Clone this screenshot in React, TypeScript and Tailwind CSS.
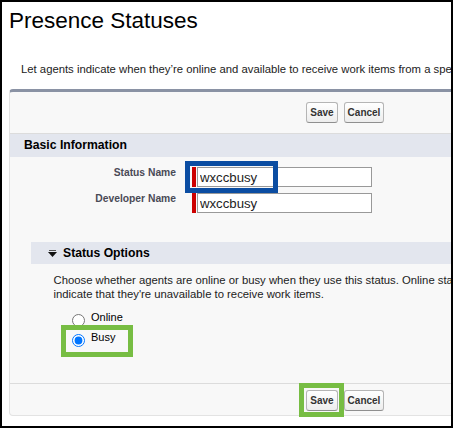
const Btn = ({ label, w }: { label: string; w: string }) => (
  <button
    className={`${w} h-[21px] rounded-[3px] border border-[#b5b5b5] border-b-[#8f8f8f] bg-gradient-to-b from-white to-[#ededed] text-[10px] font-bold text-[#333]`}
  >
    {label}
  </button>
);

const ButtonBar = () => (
  <div className="flex gap-[6px] pl-[296px]">
    <Btn label="Save" w="w-[32px]" />
    <Btn label="Cancel" w="w-[40px]" />
  </div>
);

const fields = [
  { label: "Status Name", value: "wxccbusy" },
  { label: "Developer Name", value: "wxccbusy" },
];

const radios = [
  { label: "Online", checked: false },
  { label: "Busy", checked: true },
];

export default function App() {
  return (
    <div className="relative h-[428px] w-[453px] overflow-hidden border-2 border-black bg-white font-['Liberation_Sans',Arial,sans-serif]">
      <h1 className="mt-[5px] pl-[7px] text-[22.5px] leading-[28px] text-black">Presence Statuses</h1>
      <p className="mt-[26px] whitespace-nowrap pl-[19px] text-[11.3px] leading-[16px] text-[#222]">
        Let agents indicate when they’re online and available to receive work items from a specific service channel.
      </p>

      <div className="ml-[7px] mt-[12px] w-[620px] rounded-[4px] border border-[#e3e3e3] border-t-[3px] border-t-[#8a92a4] bg-[#f8f8f8]">
        <div className="border-b border-[#dcdcdc] py-[10px]">
          <ButtonBar />
        </div>

        <div className="flex h-[23px] items-center bg-[#e3e6ee] pl-[14px] text-[12.2px] font-bold text-black">
          Basic Information
        </div>

        <div className="flex flex-col gap-[6px] pt-[10px]">
          {fields.map((f) => (
            <div key={f.label} className="flex items-start">
              <span className="w-[166px] pt-[1px] text-right text-[10.3px] font-bold leading-[10px] text-[#4a4a56]">
                {f.label}
              </span>
              <span className="ml-[16px] h-[20px] w-[4px] bg-[#c00]" />
              <input
                readOnly
                defaultValue={f.value}
                className="ml-[1px] h-[20px] w-[175px] border border-[#999] bg-white px-[2px] text-[13.2px] text-[#222] outline-none"
              />
            </div>
          ))}
        </div>

        <div className="ml-[21px] mt-[29px]">
          <div className="flex h-[22px] items-center bg-[#e3e6ee] pl-[17px]">
            <svg width="9" height="7" viewBox="0 0 9 7">
              <rect x="1" y="0" width="7" height="1" fill="#555" />
              <polygon points="0,2 9,2 4.5,7" fill="#111" />
            </svg>
            <span className="ml-[6px] text-[12.2px] font-bold text-black">Status Options</span>
          </div>

          <p className="whitespace-nowrap pl-[22.5px] pt-[9px] text-[11.3px] leading-[14px] text-[#222]">
            Choose whether agents are online or busy when they use this status. Online statuses let agents receive work items.
            <br />
            indicate that they're unavailable to receive work items.
          </p>

          <div className="mt-[10px] flex flex-col gap-[4px] pl-[41px]">
            {radios.map((r) => (
              <label key={r.label} className="flex h-[16px] items-start gap-[6px]">
                <input type="radio" name="kind" defaultChecked={r.checked} className="m-0 mt-[3px] h-[13px] w-[13px]" />
                <span className="text-[11px] leading-[12px] text-black">{r.label}</span>
              </label>
            ))}
          </div>
        </div>

        <div className="mt-[36px] border-t border-[#dcdcdc] pb-[4px] pt-[6px]">
          <ButtonBar />
        </div>
      </div>

      {/* annotation boxes */}
      <div className="absolute left-[183px] top-[159px] h-[32px] w-[93px] border-[5px] border-[#0b4da2]" />
      <div className="absolute left-[59px] top-[323px] h-[32px] w-[72px] border-[5px] border-[#77bd43]" />
      <div className="absolute left-[297px] top-[381px] h-[34px] w-[45px] border-[5px] border-[#77bd43]" />
    </div>
  );
}
